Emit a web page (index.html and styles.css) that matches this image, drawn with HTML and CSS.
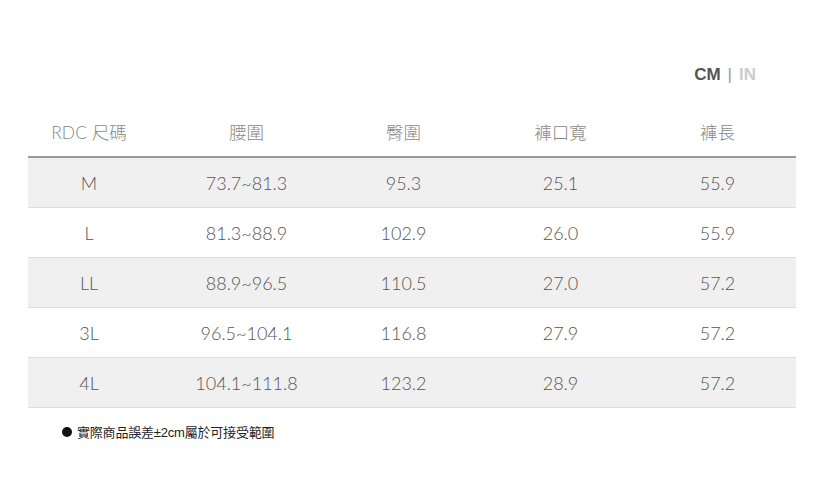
FILE: index.html
```html
<!DOCTYPE html>
<html lang="zh-Hant">
<head>
<meta charset="utf-8">
<link rel="stylesheet" href="styles.css">
</head>
<body>
<div class="page">
  <div class="units"><span class="unit-on">CM</span><span class="unit-sep">|</span><span class="unit-off">IN</span></div>
  <table class="size-table">
    <thead>
      <tr><th class="c1">RDC 尺碼</th><th>腰圍</th><th>臀圍</th><th>褲口寬</th><th>褲長</th></tr>
    </thead>
    <tbody>
      <tr class="alt"><td class="c1">M</td><td>73.7~81.3</td><td>95.3</td><td>25.1</td><td>55.9</td></tr>
      <tr><td class="c1">L</td><td>81.3~88.9</td><td>102.9</td><td>26.0</td><td>55.9</td></tr>
      <tr class="alt"><td class="c1">LL</td><td>88.9~96.5</td><td>110.5</td><td>27.0</td><td>57.2</td></tr>
      <tr><td class="c1">3L</td><td>96.5~104.1</td><td>116.8</td><td>27.9</td><td>57.2</td></tr>
      <tr class="alt"><td class="c1">4L</td><td>104.1~111.8</td><td>123.2</td><td>28.9</td><td>57.2</td></tr>
    </tbody>
  </table>
  <p class="note"><span class="dot"></span>實際商品誤差±2cm屬於可接受範圍</p>
</div>
</body>
</html>
```
FILE: styles.css
```css
html, body { margin: 0; padding: 0; background: #fff; }
.page { width: 768px; padding: 63px 29px 0 28px; }
.units {
  display: flex; justify-content: flex-end; align-items: center; gap: 7px;
  font-family: "Liberation Sans", Arial, sans-serif; font-weight: bold; font-size: 17px;
  height: 24px; padding-right: 40px;
}
.unit-on { color: #555; }
.unit-sep { color: #999; font-weight: normal; }
.unit-off { color: #ccc; }
.size-table {
  width: 768px; border-collapse: collapse; table-layout: fixed; margin-top: 19px;
  font-family: "Lato", "Noto Sans CJK TC", sans-serif; font-weight: 300;
}
.size-table th {
  font-weight: 300; font-size: 17.5px; color: #888; height: 50px; padding: 0;
  border-bottom: 2px solid #999; width: 157px;
}
.size-table th.c1 { width: 122px; padding-right: 18px; }
.size-table td {
  text-align: center; font-size: 18px; color: #555; height: 49px; padding: 0;
  border-bottom: 1px solid #ddd;
}
.size-table td.c1 { padding-right: 18px; }
.size-table tr.alt td { background: #f0f0f0; }
.note {
  margin: 14px 0 0 34px; font-family: "Liberation Sans", "Noto Sans CJK TC", sans-serif;
  font-size: 13px; color: #222; display: flex; align-items: center; letter-spacing: -0.2px;
}
.dot {
  width: 10px; height: 10px; border-radius: 50%; background: #111; margin-right: 5px;
}
```
